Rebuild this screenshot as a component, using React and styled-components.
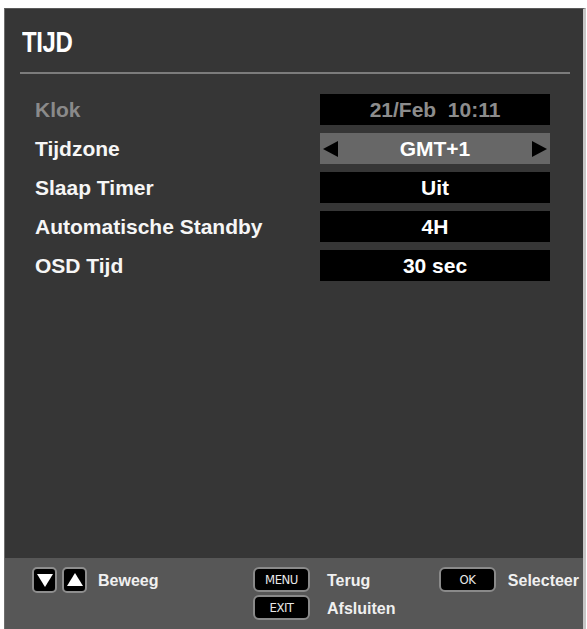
import React from "react";
import styled, { createGlobalStyle } from "styled-components";

const Global = createGlobalStyle`
  html, body { margin: 0; padding: 0; background: #ffffff; }
  body { font-family: "Liberation Sans", Arial, sans-serif; }
  * { box-sizing: border-box; }
`;

const Screen = styled.div`
  margin: 8px 0 0 4px;
  width: 582px;
  height: 621px;
  display: flex;
  flex-direction: column;
  background: #363636;
  border-left: 1px solid #6e6e6e;
  border-top: 1px solid #5a5a5a;
  border-right: 3px solid #c6c6c6;
`;

const Header = styled.div`
  height: 63px;
  display: flex;
  align-items: center;
  padding: 2px 0 0 17px;
`;

const Title = styled.h1`
  margin: 0;
  color: #ffffff;
  font-size: 30px;
  font-weight: bold;
  letter-spacing: -0.5px;
  transform: scaleX(0.8);
  transform-origin: left center;
`;

const Divider = styled.div`
  height: 2px;
  margin: 0 13px 0 15px;
  background: #7c7c7c;
`;

const List = styled.div`
  display: flex;
  flex-direction: column;
  gap: 8px;
  padding: 20px 0 0 30px;
`;

const Row = styled.div`
  display: grid;
  grid-template-columns: 285px 230px;
  height: 31px;
  align-items: center;
`;

const Label = styled.div`
  font-size: 21px;
  font-weight: bold;
  color: ${(p) => (p.$disabled ? "#8a8a8a" : "#f6f6f6")};
  line-height: 31px;
`;

const Value = styled.div`
  position: relative;
  height: 31px;
  display: flex;
  align-items: center;
  justify-content: center;
  background: ${(p) => (p.$selected ? "#676767" : "#000000")};
  color: ${(p) => (p.$disabled ? "#8c8c8c" : "#ffffff")};
  font-size: 21px;
  font-weight: bold;
  white-space: pre;
`;

const Arrow = styled.svg`
  position: absolute;
  top: 8px;
  ${(p) => (p.$side === "left" ? "left: 3px;" : "right: 3px;")}
  width: 15px;
  height: 16px;
`;

const Footer = styled.div`
  margin-top: auto;
  height: 71px;
  background: #575757;
  display: flex;
  align-items: flex-start;
  padding: 9px 0 0 27px;
`;

const Group = styled.div`
  width: ${(p) => p.$w}px;
  display: flex;
  flex-direction: column;
  gap: 3px;
`;

const KeyLine = styled.div`
  display: flex;
  align-items: center;
  height: 25px;
`;

const ArrowKey = styled.div`
  width: 25px;
  height: 26px;
  margin-right: ${(p) => p.$mr || 0}px;
  border: 2px solid #8e8e8e;
  border-radius: 5px;
  background: #000;
  display: flex;
  align-items: center;
  justify-content: center;
`;

const TextKey = styled.div`
  width: 57px;
  height: 25px;
  border: 2px solid #8a8a8a;
  border-radius: 6px;
  background: #000;
  color: #e8e8e8;
  font-family: "DejaVu Sans Condensed", "DejaVu Sans", sans-serif;
  font-stretch: condensed;
  font-size: 13px;
  display: flex;
  align-items: center;
  justify-content: center;
  letter-spacing: -0.5px;
`;

const KeyText = styled.span`
  margin-left: ${(p) => p.$ml}px;
  color: #f0f0f0;
  font-size: 16px;
  font-weight: bold;
  padding-top: 3px;
`;

const Tri = ({ dir }) => (
  <svg width="16" height="14" viewBox="0 0 16 14">
    {dir === "down" ? (
      <polygon points="0,1 16,1 8,14" fill="#fff" />
    ) : (
      <polygon points="0,13 16,13 8,0" fill="#fff" />
    )}
  </svg>
);

const rows = [
  { label: "Klok", value: "21/Feb  10:11", disabled: true },
  { label: "Tijdzone", value: "GMT+1", selected: true },
  { label: "Slaap Timer", value: "Uit" },
  { label: "Automatische Standby", value: "4H" },
  { label: "OSD Tijd", value: "30 sec" },
];

export default function App() {
  return (
    <>
      <Global />
      <Screen>
        <Header>
          <Title>TIJD</Title>
        </Header>
        <Divider />
        <List>
          {rows.map((r) => (
            <Row key={r.label}>
              <Label $disabled={r.disabled}>{r.label}</Label>
              <Value $disabled={r.disabled} $selected={r.selected}>
                {r.selected && (
                  <Arrow $side="left" viewBox="0 0 15 16">
                    <polygon points="15,0 15,16 0,8" fill="#000" />
                  </Arrow>
                )}
                {r.value}
                {r.selected && (
                  <Arrow $side="right" viewBox="0 0 15 16">
                    <polygon points="0,0 0,16 15,8" fill="#000" />
                  </Arrow>
                )}
              </Value>
            </Row>
          ))}
        </List>
        <Footer>
          <Group $w={221}>
            <KeyLine>
              <ArrowKey $mr={5}>
                <Tri dir="down" />
              </ArrowKey>
              <ArrowKey>
                <Tri dir="up" />
              </ArrowKey>
              <KeyText $ml={11}>Beweeg</KeyText>
            </KeyLine>
          </Group>
          <Group $w={186}>
            <KeyLine>
              <TextKey>MENU</TextKey>
              <KeyText $ml={17}>Terug</KeyText>
            </KeyLine>
            <KeyLine>
              <TextKey>EXIT</TextKey>
              <KeyText $ml={17}>Afsluiten</KeyText>
            </KeyLine>
          </Group>
          <Group $w={140}>
            <KeyLine>
              <TextKey>OK</TextKey>
              <KeyText $ml={12}>Selecteer</KeyText>
            </KeyLine>
          </Group>
        </Footer>
      </Screen>
    </>
  );
}
